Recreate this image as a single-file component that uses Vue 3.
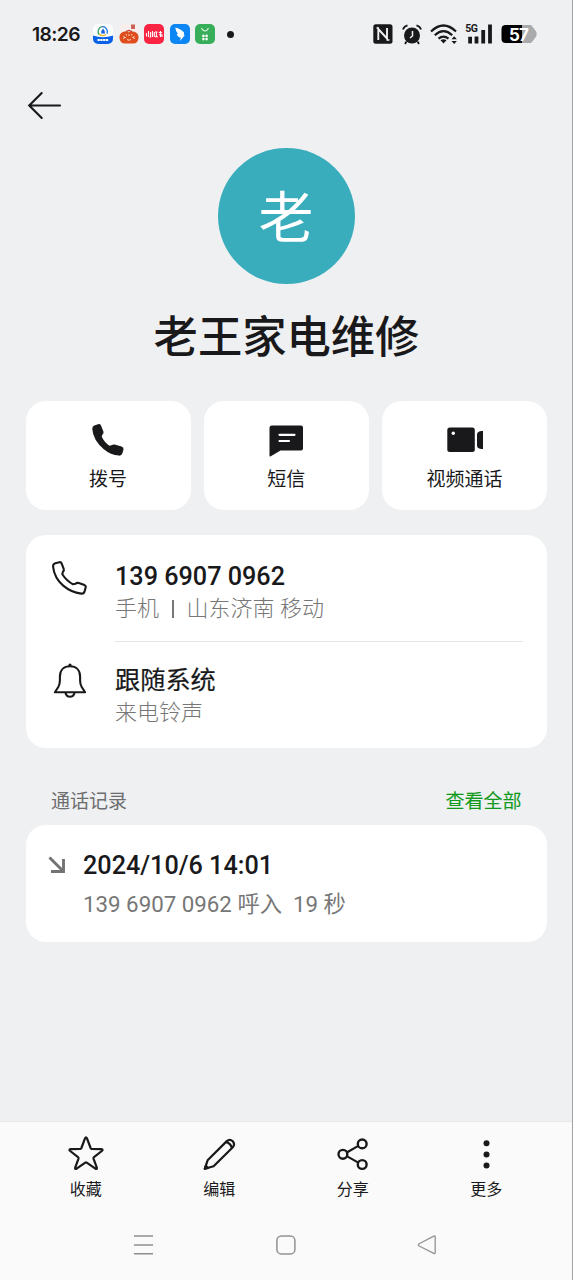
<script setup>
const tools = [
  { id: 'star', label: '收藏' },
  { id: 'edit', label: '编辑' },
  { id: 'share', label: '分享' },
  { id: 'more', label: '更多' },
]
const actions = [
  { id: 'call', label: '拨号' },
  { id: 'sms', label: '短信' },
  { id: 'video', label: '视频通话' },
]
</script>

<template>
  <div class="phone">
    <header class="status">
      <span class="clock">18:26</span>
      <div class="apps">
        <svg width="20" height="20" viewBox="0 0 20 20">
          <rect width="20" height="20" rx="5" fill="#fdfdfe" />
          <path d="M0 11.5Q10 15 20 11.5V15a5 5 0 0 1-5 5H5a5 5 0 0 1-5-5Z" fill="#0b62e8" />
          <path d="M6.3 10.8A5 5 0 0 1 9 2.7" fill="none" stroke="#35a269" stroke-width="1.3" />
          <path d="M9 2.7a5 5 0 0 1 5 7" fill="none" stroke="#2478e8" stroke-width="1.3" />
          <path d="M6 10q3 3 7 .5" fill="none" stroke="#e9b52b" stroke-width="1.3" />
          <path d="M10 4.500Q12 6.500 12 9.500H8.200Q8 6.500 10 4.500Z" fill="#1460df" />
          <path d="M4.500 16h11" stroke="#fff" stroke-width="2.200" stroke-dasharray="2.300 .5" />
        </svg>
        <svg width="20" height="20" viewBox="0 0 20 20">
          <rect width="20" height="20" rx="5" fill="#f8efed" />
          <rect x="12" y="0.5" width="4" height="4.500" fill="#cb6257" />
          <path d="M.4 13Q1 7.300 7 7.500L9.800 8.300 13 7.500Q19 7.500 19.600 13 19.300 19.600 14 19.600H6Q.8 19.600.4 13Z" fill="#df4c1d" />
          <path d="M7 7.700 10 6.500l3 1.200" stroke="#c43820" stroke-width="1.300" fill="none" />
          <path d="M4 14.500l2.500-1-2-1M16 14.500l-2.500-1 2-1M8 15.500q2 1.500 4 0M10 10v2M7 10l.5 1.500M13 10l-.5 1.500" fill="none" stroke="#ffe5cc" stroke-width=".9" />
        </svg>
        <svg width="20" height="20" viewBox="0 0 20 20">
          <rect width="20" height="20" rx="5" fill="#fb2442" />
          <g fill="none" stroke="#fff" stroke-width="1.100">
            <path d="M4.500 7v6M2.500 9v3.500M6.600 8v5h-1M8.500 7v6M10.300 8v5M11 8h2.500M12.400 8v5M11 12.800h3M14.800 8.500H18M16.500 7V13M15 10.700h3v2.300" />
          </g>
        </svg>
        <svg width="20" height="20" viewBox="0 0 20 20">
          <rect width="20" height="20" rx="5" fill="#0c86f4" />
          <path d="M5.300 3.500Q11 5 13.800 8.300q.8 1.400-.2 3h1.300L10 17l.8-3.500H9.500Q7 12 6.700 10.200L8 10Q5.700 8 5.300 3.500Z" fill="#fff" />
        </svg>
        <svg width="20" height="20" viewBox="0 0 20 20">
          <rect width="20" height="20" rx="5" fill="#37ae59" />
          <path d="M6.500 4.200q3.500 5.600 7 0" fill="none" stroke="#e5ffed" stroke-width="1.200" />
          <g fill="#fff"><circle cx="8.400" cy="11.900" r="1.300" /><circle cx="11.600" cy="11.900" r="1.300" /><circle cx="8.400" cy="15.100" r="1.300" /><circle cx="11.600" cy="15.100" r="1.300" /></g>
        </svg>
      </div>
      <i class="notice"></i>
      <div class="signals">
        <svg width="20" height="20" viewBox="0 0 20 20">
          <rect x=".3" y=".3" width="19.200" height="19.400" rx="2.500" fill="#19191b" />
          <path d="M5.300 16V5L14 14.500V4" fill="none" stroke="#eff0f2" stroke-width="1.900" />
          <path d="M3.500 4h2.500M13.500 16h3" fill="none" stroke="#eff0f2" stroke-width="1.300" />
        </svg>
        <svg width="20" height="21" viewBox="0 0 20 21">
          <circle cx="10" cy="11.500" r="8" fill="#19191b" />
          <path d="M1 5.500Q2 2.200 5.500 1.300M19 5.500Q18 2.200 14.500 1.300M4.500 17.500 3 20M15.500 17.500 17 20" fill="none" stroke="#19191b" stroke-width="1.800" />
          <path d="M10.500 7v5L8 14" fill="none" stroke="#eff0f2" stroke-width="1.500" />
        </svg>
        <svg class="wifi" width="28" height="20" viewBox="0 0 28 20">
          <g fill="none" stroke="#19191b" stroke-width="2.200">
            <path d="M1 7.500Q13.500-4.500 26 7.500M4.800 11.200q8.700-8 17.400 0M8.500 14.700q5-4.300 10 0" />
          </g>
          <path d="M10.500 16.300q3-2 6 0L13.500 19.500Z" fill="#19191b" />
          <path d="m21.500 15.300 2.700-3 2.700 3ZM21.500 16.900l2.700 3 2.700-3Z" fill="#19191b" />
        </svg>
        <div class="cell">
          <svg width="28" height="20" viewBox="0 0 28 20">
            <path d="M6.100 19.500V12.700M12.500 19.500v-7M19.200 19.500V6M26 19.500V.5" stroke="#19191b" stroke-width="3.800" />
          </svg>
          <b>5G</b>
        </div>
        <div class="battery">
          <svg width="36" height="20" viewBox="0 0 36 20">
            <path d="M5 1h25l2.500 3L35.500 8v4L32.500 16l-2.500 3H5q-4 0-4-4V5q0-4 4-4Z" fill="#a9aaac" />
            <path d="M5 1h16v18H5q-4.500 0-4.500-4V5Q.5 1 5 1Z" fill="#000" />
          </svg>
          <b>57</b>
        </div>
      </div>
    </header>

    <div class="back">
      <svg width="36" height="30" viewBox="0 0 36 30">
        <path d="M14.700 3 2.200 15.500 14.700 28M2.200 15.500H33" fill="none" stroke="#19191b" stroke-width="2.100" stroke-linecap="round" />
      </svg>
    </div>

    <section class="profile">
      <div class="avatar">老</div>
      <h1>老王家电维修</h1>
    </section>

    <section class="actions">
      <button v-for="a in actions" :key="a.id">
        <svg width="40" height="36" viewBox="0 0 40 36">
          <path v-if="a.id === 'call'" fill="#19191b" d="M6.300 2.600 10 1.200Q12 .6 13 2.400L15.400 8.600Q16 10.500 14.500 11.600L13.700 13.600Q16 19 21.300 22.800L23.500 22.200Q25 21.100 26.600 21.500L33.600 23.600Q36 24.500 35.500 26.500L34.300 30.500Q33.500 32.900 31 32.600 22.500 32 15.800 26.300 5 17 4.300 6 4.100 3.600 6.300 2.600Z" />
          <template v-else-if="a.id === 'sms'">
            <path fill="#19191b" d="M6 2.600h29q2 0 2 2v21q0 2-2 2H14.500L4.800 33.300q-1.300.6-1.300-.6V5.100Q3.500 2.600 6 2.600Z" />
            <path d="M13.500 11.800h15M13.500 18h9.500" stroke="#fff" stroke-width="2.200" stroke-linecap="round" />
          </template>
          <template v-else>
            <rect x="3.300" y="4.600" width="27.500" height="24.300" rx="2.500" fill="#19191b" />
            <path d="M39 7.900H37q-4 .5-4 3.500v11q0 3 4 3.500H39Z" fill="#19191b" />
            <circle cx="9.300" cy="10.300" r="1.700" fill="#fff" />
          </template>
        </svg>
        <span>{{ a.label }}</span>
      </button>
    </section>

    <section class="card info">
      <div class="row">
        <svg class="lead" width="38" height="38" viewBox="0 0 38 38">
          <path fill="none" stroke="#19191b" stroke-width="2.100" stroke-linejoin="round" d="M4.300 4.300 8.400 3.200Q9.900 2.800 10.500 4.200L12.700 9.800Q13.300 11.400 11.900 12.700L11.300 15.300Q15.500 21.800 22 25.300L24.500 24.800Q26 23.400 27.800 24L33.500 26.100Q35.200 26.900 34.600 28.700L33.400 33Q32.600 35 30.200 34.600 20 33.200 12.200 26.600 3.300 18.800 2.100 7.800 1.800 5.100 4.300 4.300Z" />
        </svg>
        <div class="copy line">
          <strong>139 6907 0962</strong>
          <p>手机<i class="bar"></i>山东济南 移动</p>
        </div>
      </div>
      <div class="row second">
        <svg class="lead" width="38" height="38" viewBox="0 0 38 38">
          <path fill="none" stroke="#19191b" stroke-width="2.100" stroke-linejoin="round" d="M19 4.300C12.500 4.300 8.900 8.500 8.900 14.500V18.500q0 3.500-1.600 6.500L3.900 30.300H34.100L30.700 25Q29.100 22 29.100 18.500V14.500C29.100 8.500 25.500 4.300 19 4.300ZM14.500 31Q15.500 34.800 19 34.800t4.500-3.800" />
          <circle cx="19" cy="3" r="1.600" fill="#19191b" />
        </svg>
        <div class="copy">
          <strong class="han">跟随系统</strong>
          <p>来电铃声</p>
        </div>
      </div>
    </section>

    <div class="heading"><span>通话记录</span><a>查看全部</a></div>

    <section class="card log">
      <svg class="arrow" width="18" height="18" viewBox="0 0 18 18">
        <path d="M1.500 1.500 15 15M15.500 3V15.500H3" fill="none" stroke="#737373" stroke-width="2.900" />
      </svg>
      <div>
        <strong>2024/10/6 14:01</strong>
        <p>139 6907 0962 呼入<span class="duration">19 秒</span></p>
      </div>
    </section>

    <footer>
      <div class="tools">
        <div v-for="t in tools" :key="t.id" class="tool">
          <svg width="38" height="38" viewBox="0 0 38 38" fill="none" stroke="#19191b" stroke-width="2.200" stroke-linejoin="round">
            <path v-if="t.id === 'star'" d="M18.100 3.200Q19 1.400 19.900 3.200L23.600 13Q23.900 13.700 24.700 13.800L34.300 14.200Q36.600 14.400 34.800 16L27 22.100Q26.300 22.600 26.500 23.500L29.800 32.600Q30.300 34.700 28.400 33.700L19.700 27.700Q19 27.200 18.300 27.700L9.600 33.700Q7.700 34.700 8.200 32.600L11.500 23.500Q11.700 22.600 11 22.100L3.200 16Q1.400 14.400 3.700 14.200L13.300 13.800Q14.100 13.700 14.400 13Z" />
            <template v-else-if="t.id === 'edit'">
              <path d="M4.800 33.800 7.600 25.300 26.800 6.100Q29.800 3.500 32.800 6.300 35.300 9.400 32.800 12.300L13.600 31.300ZM25.800 7.200Q30.800 8.100 31.900 13.200" />
              <path d="m4.800 33.800 1-3 2.200 2.200Z" fill="#19191b" />
            </template>
            <template v-else-if="t.id === 'share'">
              <path d="M13.200 17.200 24.300 10.900M13.200 21.400 24.300 27.600" />
              <g stroke-width="2.400"><circle cx="8.900" cy="19.300" r="4.400" /><circle cx="28.200" cy="8.900" r="4.400" /><circle cx="28.200" cy="29.500" r="4.400" /></g>
            </template>
            <g v-else fill="#19191b" stroke="none"><circle cx="19.500" cy="8.200" r="3" /><circle cx="19.500" cy="19.400" r="3" /><circle cx="19.500" cy="30.600" r="3" /></g>
          </svg>
          <span>{{ t.label }}</span>
        </div>
      </div>
      <nav>
        <svg width="22" height="22" viewBox="0 0 22 22"><path d="M1 2h19M1 11h19M1 19.800h19" stroke="#8e8e8e" stroke-width="1.600" /></svg>
        <svg width="22" height="22" viewBox="0 0 22 22"><rect x="1.900" y="1.900" width="18" height="18" rx="4.500" fill="none" stroke="#929292" stroke-width="1.500" /></svg>
        <svg width="22" height="22" viewBox="0 0 22 22"><path d="M16.800 2.100Q18.200 1.500 18.200 3V18.500Q18.200 20 16.800 19.400L2.200 12Q.4 11 2.200 9.700Z" fill="none" stroke="#929292" stroke-width="1.300" /></svg>
      </nav>
    </footer>
  </div>
</template>

<style>
html, body { margin: 0; }
</style>

<style scoped>
* { box-sizing: border-box; }
.phone {
  width: 573px; height: 1280px; overflow: hidden;
  display: flex; flex-direction: column;
  background: #eff0f2; color: #19191b;
  border-right: 1px solid #a3a4a6;
  font-family: Roboto, "Noto Sans CJK SC", sans-serif;
}
svg { display: block; flex: none; }
p, h1 { margin: 0; }
.status { height: 68px; padding: 0 35px 0 32px; display: flex; align-items: center; }
.clock { width: 61px; font: 600 19.300px/24px Inter, sans-serif; letter-spacing: -.6px; }
.apps { display: flex; gap: 5.500px; }
.notice { width: 7px; height: 7px; border-radius: 50%; background: #19191b; margin-left: 11.500px; }
.signals { margin-left: auto; display: flex; align-items: center; gap: 8.800px; }
.wifi { margin-right: -3px; }
.cell, .battery { position: relative; }
.cell b { position: absolute; left: 1px; top: 0; font: 700 10.500px/10px Roboto, sans-serif; letter-spacing: -.5px; }
.battery b { position: absolute; left: 8px; top: 1px; color: #fff; font: 700 17px/20px Inter, sans-serif; letter-spacing: -.8px; }
.back { height: 79.500px; padding: 22px 0 0 27px; }
.profile { display: flex; flex-direction: column; align-items: center; height: 253.500px; }
.avatar {
  width: 137px; height: 136.500px; border-radius: 50%; background: #3aadbc; color: #fff;
  font-size: 55px; line-height: 140px; text-align: center; flex: none;
}
h1 { margin-top: 21px; padding-left: 1px; font-size: 44.300px; line-height: 66px; font-weight: 500; }
.actions { height: 108.500px; margin: 0 25px 0 25.500px; display: grid; grid-template-columns: repeat(3, 1fr); gap: 13px; }
button {
  border: 0; border-radius: 20px; background: #fff; padding: 21.500px 0 0; color: inherit;
  display: flex; flex-direction: column; align-items: center;
  font-family: inherit; font-size: 19px; line-height: 28px;
}
button span { margin-top: 7px; }
.card { margin: 0 25px 0 25.500px; border-radius: 20px; background: #fff; }
.info { margin-top: 25px; height: 213px; flex: none; }
.row { display: flex; height: 107px; padding: 24px 24px 0 25.500px; }
.lead { margin-right: 26px; }
.copy { flex: 1; }
.line { border-bottom: 1px solid #e6e6e6; }
strong { display: block; font-size: 25.200px; line-height: 35px; font-weight: 500; }
.han { font-weight: 400; -webkit-text-stroke: .2px #19191b; line-height: 38px; }
p { font-size: 22px; line-height: 29px; color: #777; font-weight: 300; }
.han + p { line-height: 26px; }
.bar { display: inline-block; width: 1.500px; height: 18px; background: #777; margin: 0 13px; vertical-align: -2px; }
.second { padding-top: 20px; }
.heading { height: 77px; padding: 38px 50.500px 0 51px; display: flex; justify-content: space-between; font-size: 19px; line-height: 32px; color: #6c6d6f; flex: none; }
.heading a { color: #109a1c; -webkit-text-stroke: .1px #109a1c; }
.log { height: 117px; display: flex; padding: 23px 24px 0 22.500px; flex: none; }
.arrow { margin: 8px 17px 0 0; }
.log p { font-size: 22.300px; line-height: 32px; margin-top: 5px; font-weight: 400; }
.duration { margin-left: 11px; }
footer { margin-top: auto; height: 159px; background: #fafafa; border-top: 1px solid #e8e8e9; }
.tools { display: grid; grid-template-columns: repeat(4, 1fr); padding: 13px 19px 0; }
.tool { display: flex; flex-direction: column; align-items: center; font-size: 16px; line-height: 24px; }
.tool span { margin-top: 5px; }
nav { display: grid; grid-template-columns: repeat(3, 1fr); justify-items: center; padding: 32px 73px 0; }
</style>
